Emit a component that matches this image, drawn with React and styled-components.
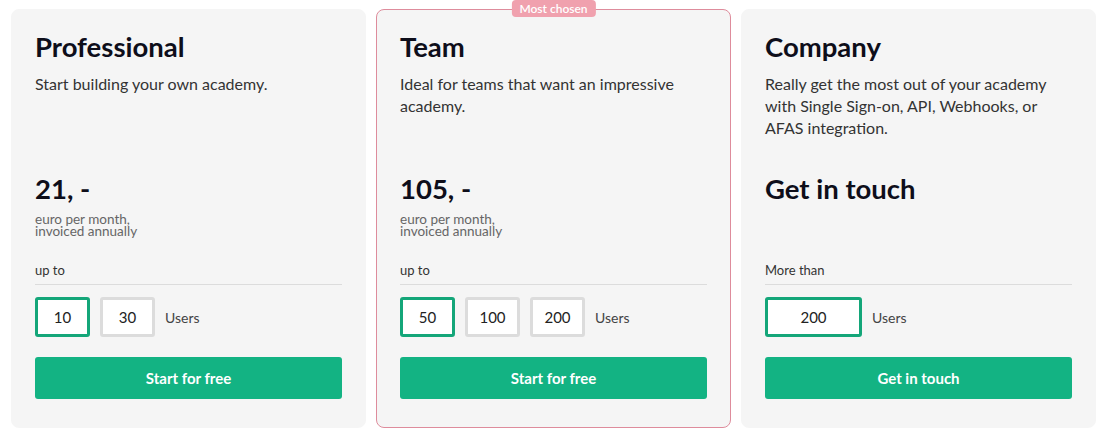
import styled, { createGlobalStyle } from "styled-components";

const GlobalStyle = createGlobalStyle`
  body {
    margin: 0;
    background: #ffffff;
    font-family: Lato, "Open Sans", sans-serif;
  }
`;

const Grid = styled.div`
  display: flex;
  gap: 10px;
  padding: 9px 12px 0 11px;
`;

const Card = styled.div`
  position: relative;
  flex: 1;
  display: flex;
  flex-direction: column;
  background: #f5f5f5;
  border-radius: 8px;
  padding: 21px 23px 28px 23px;
  border: 1px solid ${(p) => (p.$featured ? "#de8c9c" : "#f5f5f5")};
  min-width: 0;
`;

const Badge = styled.div`
  position: absolute;
  top: -10px;
  left: 50%;
  transform: translateX(-50%);
  background: #f0a1ae;
  color: #fff;
  font-size: 12px;
  font-weight: 600;
  line-height: 17px;
  padding: 0 8px;
  border-radius: 4px;
  white-space: nowrap;
`;

const Title = styled.h2`
  margin: 0;
  font-size: 27.5px;
  font-weight: 700;
  line-height: 32px;
  color: #0e0e1a;
`;

const Description = styled.p`
  margin: 10px 0 0;
  font-size: 16px;
  line-height: 22px;
  color: #333;
  height: 100px;
`;

const Price = styled.div`
  font-size: 27.5px;
  font-weight: 700;
  line-height: 32px;
  color: #0e0e1a;
`;

const PriceNote = styled.div`
  margin-top: 8px;
  font-size: 13.5px;
  line-height: 12px;
  color: #666;
  height: 24px;
`;

const Label = styled.div`
  margin-top: 23px;
  font-size: 13px;
  line-height: 20px;
  color: #333;
  padding-bottom: 4px;
  border-bottom: 1px solid #dcdcdc;
`;

const Options = styled.div`
  display: flex;
  align-items: center;
  gap: 10px;
  margin-top: 12px;
`;

const Option = styled.div`
  box-sizing: border-box;
  width: ${(p) => p.$width || 55}px;
  height: 40px;
  display: flex;
  align-items: center;
  justify-content: center;
  background: #fff;
  border: 3px solid ${(p) => (p.$active ? "#14a679" : "#dcdcdc")};
  border-radius: 3px;
  font-size: 15px;
  color: #222;
`;

const Unit = styled.span`
  font-size: 14px;
  color: #444;
`;

const Action = styled.button`
  margin-top: 20px;
  height: 42px;
  border: none;
  border-radius: 3px;
  background: #13b383;
  color: #fff;
  font-family: inherit;
  font-size: 15px;
  font-weight: 700;
  cursor: pointer;
`;

const plans = [
  {
    name: "Professional",
    description: "Start building your own academy.",
    price: "21, -",
    note: true,
    label: "up to",
    options: [{ value: "10", active: true }, { value: "30" }],
    action: "Start for free",
  },
  {
    name: "Team",
    description: "Ideal for teams that want an impressive academy.",
    price: "105, -",
    note: true,
    featured: true,
    label: "up to",
    options: [{ value: "50", active: true }, { value: "100" }, { value: "200" }],
    action: "Start for free",
  },
  {
    name: "Company",
    description:
      "Really get the most out of your academy with Single Sign-on, API, Webhooks, or AFAS integration.",
    price: "Get in touch",
    label: "More than",
    options: [{ value: "200", active: true, width: 97 }],
    action: "Get in touch",
  },
];

export default function App() {
  return (
    <>
      <GlobalStyle />
      <Grid>
        {plans.map((plan) => (
          <Card key={plan.name} $featured={plan.featured}>
            {plan.featured && <Badge>Most chosen</Badge>}
            <Title>{plan.name}</Title>
            <Description>{plan.description}</Description>
            <Price>{plan.price}</Price>
            <PriceNote>
              {plan.note && (
                <>
                  euro per month,
                  <br />
                  invoiced annually
                </>
              )}
            </PriceNote>
            <Label>{plan.label}</Label>
            <Options>
              {plan.options.map((o) => (
                <Option key={o.value} $active={o.active} $width={o.width}>
                  {o.value}
                </Option>
              ))}
              <Unit>Users</Unit>
            </Options>
            <Action>{plan.action}</Action>
          </Card>
        ))}
      </Grid>
    </>
  );
}
